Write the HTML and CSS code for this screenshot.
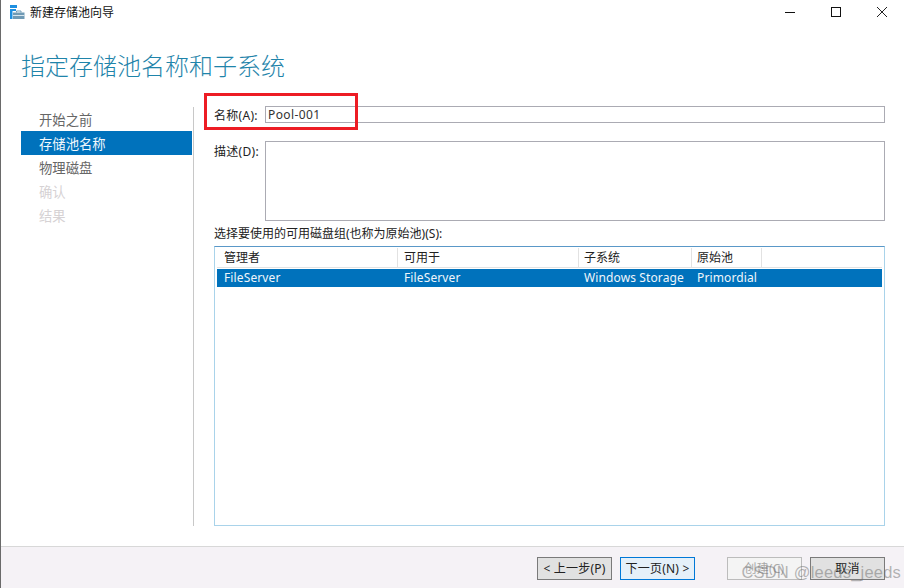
FILE: index.html
```html
<!DOCTYPE html>
<html lang="zh-CN">
<head>
<meta charset="utf-8">
<title>新建存储池向导</title>
<link rel="stylesheet" href="styles.css">
</head>
<body>
<div class="window">
  <header class="titlebar">
    <svg class="app-icon" width="15" height="15" viewBox="0 0 15 15">
      <path d="M0 0H7V3H0ZM0 4H6V6H2.500V14H0Z" fill="#1e8fe0"/>
      <path d="M3 7.500H14.500V14H3Z" fill="#6f9ab5"/>
      <path d="M6.500 7.500V6H11V7.500" fill="none" stroke="#6f9ab5" stroke-width="1"/>
      <path d="M3 10.500H14.500" stroke="#d8e6ee" stroke-width="1"/>
    </svg>
    <span class="title">新建存储池向导</span>
    <div class="controls">
      <svg class="ctl" width="12" height="12" viewBox="0 0 12 12"><path d="M1 6.500H11" stroke="#111" stroke-width="1"/></svg>
      <svg class="ctl" width="12" height="12" viewBox="0 0 12 12"><rect x="1.500" y="1.500" width="9" height="9" fill="none" stroke="#111" stroke-width="1"/></svg>
      <svg class="ctl" width="12" height="12" viewBox="0 0 12 12"><path d="M1 1L11 11M11 1L1 11" stroke="#222" stroke-width="1"/></svg>
    </div>
  </header>
  <h1 class="heading">指定存储池名称和子系统</h1>
  <div class="body">
    <nav class="steps">
      <div class="step">开始之前</div>
      <div class="step active">存储池名称</div>
      <div class="step">物理磁盘</div>
      <div class="step off">确认</div>
      <div class="step off">结果</div>
    </nav>
    <main class="form">
      <div class="field name-field">
        <label class="lbl">名称(A):</label>
        <div class="input">Pool-001</div>
      </div>
      <div class="field desc-field">
        <label class="lbl">描述(D):</label>
        <div class="textarea"></div>
      </div>
      <div class="list-label">选择要使用的可用磁盘组(也称为原始池)(S):</div>
      <div class="list">
        <div class="row head">
          <div class="cell">管理者</div>
          <div class="cell">可用于</div>
          <div class="cell">子系统</div>
          <div class="cell">原始池</div>
          <div class="cell"></div>
        </div>
        <div class="row sel">
          <div class="cell">FileServer</div>
          <div class="cell">FileServer</div>
          <div class="cell">Windows Storage</div>
          <div class="cell">Primordial</div>
          <div class="cell"></div>
        </div>
      </div>
    </main>
  </div>
  <footer class="footer">
    <button class="btn">&lt; 上一步(P)</button>
    <button class="btn primary">下一页(N) &gt;</button>
    <button class="btn disabled">创建(C)</button>
    <button class="btn">取消</button>
  </footer>
  <div class="highlight"></div>
  <div class="watermark">CSDN @leeds_jeeds</div>
</div>
</body>
</html>
```

FILE: styles.css
```css
* { box-sizing: border-box; }
html, body { margin: 0; padding: 0; overflow: hidden; background: #fff; }
.window {
  position: relative;
  width: 904px;
  height: 588px;
  border-left: 1px solid #6a6a6a;
  display: flex;
  flex-direction: column;
  font: 12px/16px "Noto Sans", "Noto Sans CJK SC", sans-serif;
  color: #222;
}
.titlebar {
  height: 30px;
  display: flex;
  align-items: flex-start;
  padding-left: 9px;
  flex: none;
}
.app-icon { margin-top: 5px; }
.title { margin-left: 5px; margin-top: 5px; color: #111; }
.controls {
  margin-left: auto;
  display: flex;
  gap: 34px;
  padding: 6px 16px 0 0;
}
.heading {
  margin: 0;
  height: 77px;
  flex: none;
  padding: 19px 0 0 20px;
  font-size: 24px;
  line-height: 34px;
  font-weight: 300;
  color: #1f84aa;
}
.body {
  height: 419px;
  flex: none;
  display: flex;
  padding-left: 20px;
}
.steps {
  width: 173px;
  flex: none;
  border-right: 1px solid #c8c8c8;
  padding: 0 1px 0 0;
}
.step {
  height: 24px;
  padding-left: 18px;
  font-size: 13.33px;
  line-height: 26px;
  color: #666;
}
.step.active { background: #0072bc; color: #f2f8fc; }
.step.off { color: #d6d2d4; }
.form {
  width: 671px;
  margin-left: 20px;
  display: flex;
  flex-direction: column;
}
.field { display: flex; }
.lbl { width: 51px; flex: none; letter-spacing: 0.3px; }
.name-field { margin-top: -1px; line-height: 17px; height: 17px; }
.name-field .lbl { padding-top: 1px; }
.input {
  flex: 1;
  height: 17px;
  border: 1px solid #ababb3;
  padding-left: 2px;
  line-height: 15px;
  color: #333;
  letter-spacing: 0.4px;
}
.desc-field { margin-top: 18px; }
.textarea { flex: 1; height: 80px; border: 1px solid #ababb3; }
.desc-field .lbl { padding-top: 3px; }
.list-label { margin-top: 5px; height: 20px; line-height: 16px; }
.list {
  height: 280px;
  border: 1px solid #a9d3ea;
  border-top-color: #5a98c8;
  padding: 1px 2px;
}
.row {
  display: grid;
  grid-template-columns: 181px 181px 113px 70px 1fr;
}
.cell { padding-left: 5px; white-space: nowrap; }
.cell:nth-child(1) { padding-left: 7px; }
.cell:nth-child(2) { padding-left: 6px; }
.head { height: 20px; margin-bottom: 1px; border-bottom: 1px solid #e2e2e2; color: #222; line-height: 20px; }
.head .cell { border-right: 1px solid #e2e2e2; height: 19px; }
.head .cell:last-child { border-right: 0; }
.sel { height: 18px; background: #0072bc; color: #f0f6fb; line-height: 17px; letter-spacing: 0.12px; }
.footer {
  flex: 1;
  margin-top: 20px;
  border-top: 1px solid #d8d8d8;
  background: #f5f2f6;
  display: flex;
  padding: 10px 19px 0 0;
  align-items: flex-start;
  justify-content: flex-end;
  gap: 8px;
}
.btn {
  width: 75px;
  height: 23px;
  padding: 0;
  border: 1px solid #7a7a7a;
  background: #e1e1e1;
  font: inherit;
  line-height: 18px;
  letter-spacing: 0.2px;
  color: #222;
}
.btn.primary { border-color: #0078d7; background: #e5f0f9; }
.btn.disabled { margin-left: 24px; background: #f4f4f4; border-color: #bcbcbc; color: #a8a8a8; }
.highlight {
  position: absolute;
  left: 203px;
  top: 93px;
  width: 154px;
  height: 37px;
  border: 3px solid #ed1c24;
}
.watermark {
  position: absolute;
  right: 3px;
  top: 563px;
  font: 16.5px/18px "Liberation Sans", sans-serif;
  letter-spacing: 0.2px;
  color: rgba(110, 110, 110, 0.5);
  white-space: nowrap;
}
```
